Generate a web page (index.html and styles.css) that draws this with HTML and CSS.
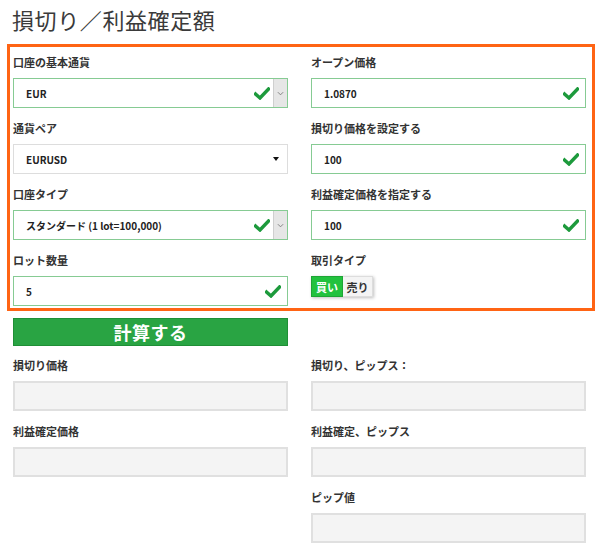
FILE: index.html
```html
<!DOCTYPE html>
<html lang="ja">
<head>
<meta charset="utf-8">
<link rel="stylesheet" href="styles.css">
</head>
<body>
<div class="page">
  <h1 class="title">損切り／利益確定額</h1>
  <div class="box">
    <div class="grid">
      <div class="field">
        <div class="label">口座の基本通貨</div>
        <div class="input valid">
          <span class="val">EUR</span>
          <svg class="check" viewBox="0 0 16 13"><path d="M1.5 7 L6 11 L14.5 2" /></svg>
          <span class="arrowbox"><svg viewBox="0 0 8 5"><path d="M1 1 L4 4 L7 1"/></svg></span>
        </div>
      </div>
      <div class="field">
        <div class="label">オープン価格</div>
        <div class="input valid pad">
          <span class="val">1.0870</span>
          <svg class="check" viewBox="0 0 16 13"><path d="M1.5 7 L6 11 L14.5 2" /></svg>
        </div>
      </div>
      <div class="field">
        <div class="label">通貨ペア</div>
        <div class="input plain">
          <span class="val">EURUSD</span>
          <span class="caret"></span>
        </div>
      </div>
      <div class="field">
        <div class="label">損切り価格を設定する</div>
        <div class="input valid pad">
          <span class="val">100</span>
          <svg class="check" viewBox="0 0 16 13"><path d="M1.5 7 L6 11 L14.5 2" /></svg>
        </div>
      </div>
      <div class="field">
        <div class="label">口座タイプ</div>
        <div class="input valid">
          <span class="val">スタンダード (1 lot=100,000)</span>
          <svg class="check" viewBox="0 0 16 13"><path d="M1.5 7 L6 11 L14.5 2" /></svg>
          <span class="arrowbox"><svg viewBox="0 0 8 5"><path d="M1 1 L4 4 L7 1"/></svg></span>
        </div>
      </div>
      <div class="field">
        <div class="label">利益確定価格を指定する</div>
        <div class="input valid pad">
          <span class="val">100</span>
          <svg class="check" viewBox="0 0 16 13"><path d="M1.5 7 L6 11 L14.5 2" /></svg>
        </div>
      </div>
      <div class="field">
        <div class="label">ロット数量</div>
        <div class="input valid pad">
          <span class="val">5</span>
          <svg class="check" viewBox="0 0 16 13"><path d="M1.5 7 L6 11 L14.5 2" /></svg>
        </div>
      </div>
      <div class="field">
        <div class="label">取引タイプ</div>
        <div class="toggle">
          <span class="opt on">買い</span><span class="opt off">売り</span>
        </div>
      </div>
    </div>
  </div>
  <div class="btnrow"><button class="calc">計算する</button></div>
  <div class="grid results">
    <div class="field">
      <div class="label">損切り価格</div>
      <div class="input out"></div>
    </div>
    <div class="field">
      <div class="label">損切り、ピップス：</div>
      <div class="input out"></div>
    </div>
    <div class="field">
      <div class="label">利益確定価格</div>
      <div class="input out"></div>
    </div>
    <div class="field">
      <div class="label">利益確定、ピップス</div>
      <div class="input out"></div>
    </div>
    <div class="field"></div>
    <div class="field">
      <div class="label">ピップ値</div>
      <div class="input out"></div>
    </div>
  </div>
</div>
</body>
</html>
```
FILE: styles.css
```css
* { box-sizing: border-box; }
html, body { margin: 0; padding: 0; background: #fff; }
body {
  font-family: "Noto Sans CJK JP", "Noto Sans", sans-serif;
  color: #333;
  width: 600px;
  height: 548px;
  overflow: hidden;
}
.page { padding: 4px 0 0 0; }
.title {
  margin: 0 0 10px 12px;
  font-size: 22px;
  line-height: 30px;
  font-weight: 400;
  color: #3a3a3a;
  letter-spacing: 0.6px;
}
.box {
  margin-left: 7px;
  width: 588px;
  border: 3px solid #ff6414;
  padding: 7px 6px 2px 3px;
}
.grid {
  display: grid;
  grid-template-columns: 275px 275px;
  column-gap: 23px;
  row-gap: 12px;
}
.label {
  font-size: 11px;
  line-height: 16px;
  font-weight: 700;
  color: #333;
  margin-bottom: 8px;
  white-space: nowrap;
}
.input {
  height: 30px;
  display: flex;
  align-items: center;
  background: #fff;
  border: 1px solid #ddd;
  font-size: 10px;
  font-weight: 700;
  color: #222;
  padding-left: 12px;
}
.input.valid { border-color: #86cb93; }
.input.pad { padding-right: 6px; }
.val { flex: 1; white-space: nowrap; }
.check {
  width: 16px;
  height: 13px;
  flex: none;
}
.check path {
  fill: none;
  stroke: #1d9a3c;
  stroke-width: 3.4;
  stroke-linecap: square;
}
.arrowbox {
  flex: none;
  margin-left: 3px;
  width: 14px;
  height: 28px;
  background: #e6e6e6;
  border-left: 1px solid #cfcfcf;
  display: flex;
  align-items: center;
  justify-content: center;
}
.arrowbox svg { width: 7px; height: 5px; }
.arrowbox path { fill: none; stroke: #777; stroke-width: 1; }
.input.plain { padding-right: 8px; }
.caret {
  width: 0; height: 0;
  border-left: 3.5px solid transparent;
  border-right: 3.5px solid transparent;
  border-top: 4px solid #111;
}
.toggle {
  display: flex;
  width: 62px;
  height: 21px;
  box-shadow: 1px 1px 3px rgba(0,0,0,0.25);
}
.opt {
  display: flex;
  align-items: center;
  justify-content: center;
  font-size: 11px;
  font-weight: 700;
}
.opt.on {
  width: 32px;
  background: #22c23e;
  color: #fff;
  border: 1px solid #1ea535;
}
.opt.off {
  width: 30px;
  background: #f4f4f4;
  color: #333;
  border: 1px solid #ddd;
  border-left: none;
}
.btnrow { padding: 7px 0 0 13px; }
.calc {
  display: block;
  width: 275px;
  height: 28px;
  margin: 0;
  padding: 0;
  background: #29a443;
  border: 1px solid #1f8f36;
  color: #fff;
  font-family: "Noto Sans CJK JP", sans-serif;
  font-size: 18px;
  font-weight: 700;
  line-height: 26px;
  letter-spacing: 0.5px;
}
.results { padding: 11px 0 0 13px; }
.input.out {
  background: #f4f4f4;
  border: 2px solid #e0e0e0;
}
```
